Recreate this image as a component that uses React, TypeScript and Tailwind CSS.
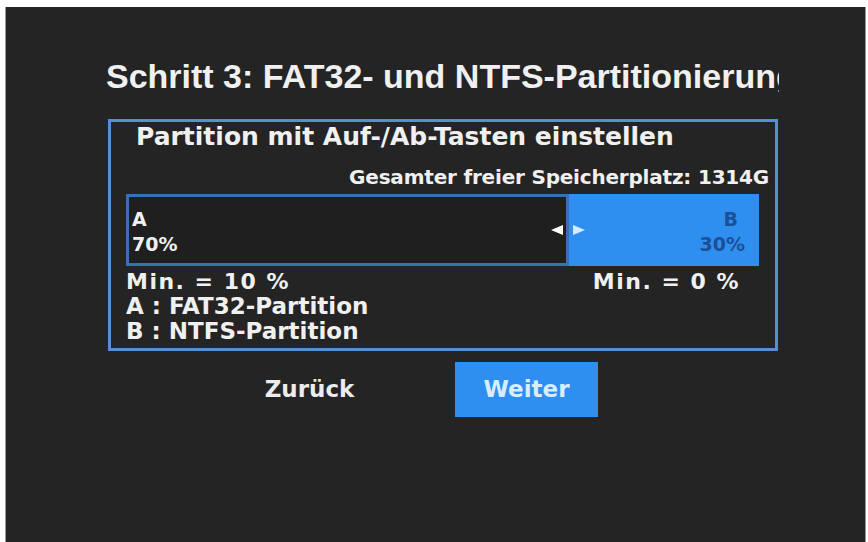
import React from 'react';

const dv = { fontFamily: '"DejaVu Sans", "Liberation Sans", sans-serif' };

export default function App() {
  return (
    <div className="w-[868px] h-[542px] bg-white pt-[7px] pl-[5px] pr-[2px] overflow-hidden">
      <div className="h-full bg-[#242424] border-l border-r border-[#9a9a9a] pt-[49px] text-[#f0f0f0]">
        {/* Titel */}
        <div className="ml-[100px] w-[673px] overflow-hidden whitespace-nowrap">
          <h1 className="text-[34px] leading-[40px] font-bold" style={{ fontFamily: '"Liberation Sans", Arial, sans-serif' }}>
            Schritt 3: FAT32- und NTFS-Partitionierung
          </h1>
        </div>

        <div style={dv} className="font-bold">
          <div className="ml-[102px] mt-[23px] w-[670px] h-[232px] border-[3px] border-[#5a8ed0] flex flex-col">
            <p className="pl-[25px] text-[25px] leading-[29px] whitespace-nowrap">Partition mit Auf-/Ab-Tasten einstellen</p>
            <p className="mt-[14px] pr-[6px] text-right text-[20px] leading-[24px] tracking-[-0.2px] whitespace-nowrap">
              Gesamter freier Speicherplatz: 1314G
            </p>

            {/* Regler */}
            <div className="ml-[15px] mt-[5px] w-[633px] h-[72px] flex">
              <div className="flex-1 border-[3px] border-[#3b6fb4] bg-[#1f1f1f] flex items-center justify-between pl-[3px]">
                <div className="self-start pt-[10px] text-[19px] leading-[25px]">
                  <div>A</div>
                  <div>70%</div>
                </div>
                <span className="mr-[3px] w-0 h-0 border-y-[5px] border-y-transparent border-r-[12px] border-r-white" />
              </div>
              <div className="w-[190px] bg-[#2f8ff0] flex items-center justify-between">
                <span className="ml-[4px] w-0 h-0 border-y-[5px] border-y-transparent border-l-[12px] border-l-[#d8ecff]" />
                <div className="self-start pt-[13px] pr-[14px] text-[19px] leading-[25px] text-[#1b4f98] text-right">
                  <div className="pr-[7px]">B</div>
                  <div>30%</div>
                </div>
              </div>
            </div>

            <div className="mt-[3px] pl-[15px] text-[22px] leading-[25px] whitespace-nowrap">
              <div className="flex justify-between pr-[35px]">
                <span className="tracking-[1.5px]">Min. = 10 %</span>
                <span className="tracking-[1.5px]">Min. = 0 %</span>
              </div>
              <div className="text-[23px]">A : FAT32-Partition</div>
              <div className="text-[23px]">B : NTFS-Partition</div>
            </div>
          </div>

          {/* Knöpfe */}
          <div className="ml-[232px] mt-[11px] flex gap-[74px]">
            <button className="w-[143px] h-[55px] text-[23px] text-[#ececec] font-bold">Zurück</button>
            <button className="w-[143px] h-[55px] bg-[#2f8ff0] text-[23px] text-[#d9edff] font-bold">Weiter</button>
          </div>
        </div>
      </div>
    </div>
  );
}
